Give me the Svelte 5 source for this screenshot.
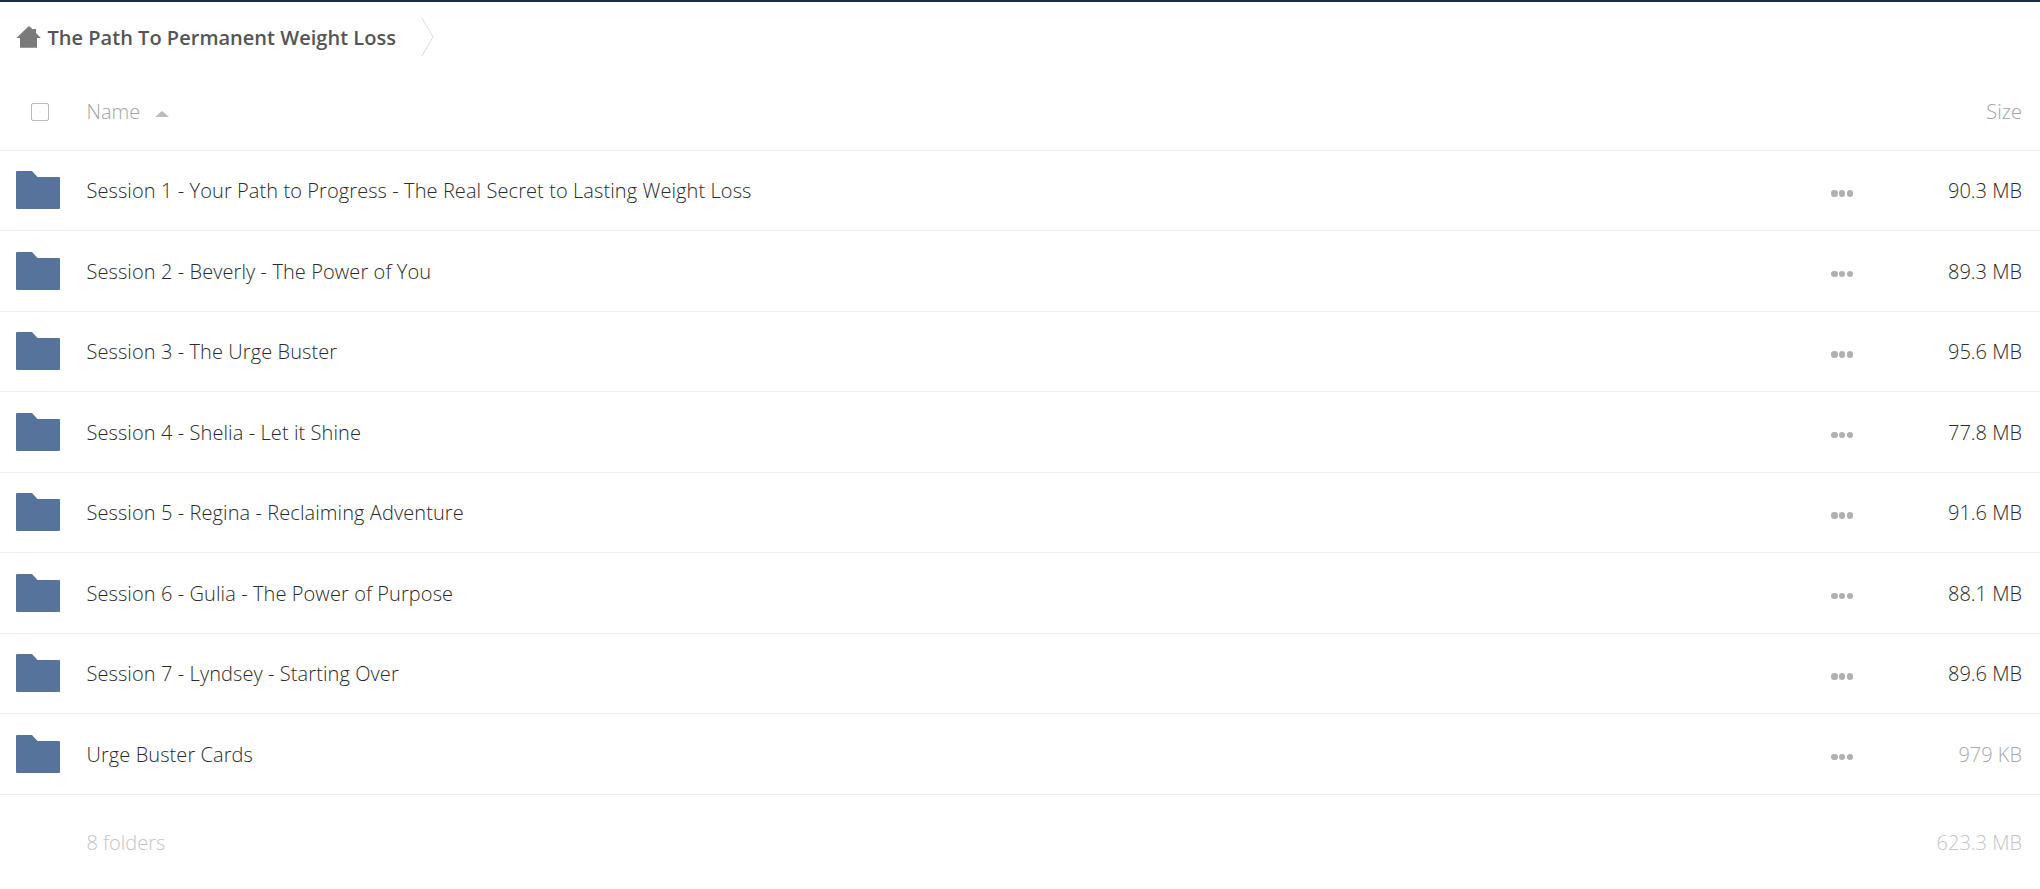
<script>
  let folders = [
    { name: 'Session 1 - Your Path to Progress - The Real Secret to Lasting Weight Loss', size: '90.3 MB' },
    { name: 'Session 2 - Beverly - The Power of You', size: '89.3 MB' },
    { name: 'Session 3 - The Urge Buster', size: '95.6 MB' },
    { name: 'Session 4 - Shelia - Let it Shine', size: '77.8 MB' },
    { name: 'Session 5 - Regina - Reclaiming Adventure', size: '91.6 MB' },
    { name: 'Session 6 - Gulia - The Power of Purpose', size: '88.1 MB' },
    { name: 'Session 7 - Lyndsey - Starting Over', size: '89.6 MB' },
    { name: 'Urge Buster Cards', size: '979 KB', small: true }
  ];
</script>

<div class="page">
  <nav class="crumbs">
    <svg class="home" width="25" height="22" viewBox="0 0 25 22">
      <path d="M13 0 L17 3.4 V3 H20 V7 L24.8 12 H21 V21.8 H4 V12 H0.4 Z" fill="#7a7a7a" />
    </svg>
    <span class="crumb-title">The Path To Permanent Weight Loss</span>
    <svg class="chevron" width="14" height="40" viewBox="0 0 14 40">
      <path d="M1 1 L12 20 L1 39" fill="none" stroke="#dcdcdc" stroke-width="1" />
    </svg>
  </nav>

  <div class="row head">
    <div class="check-cell"><span class="checkbox"></span></div>
    <div class="name">Name <span class="sort"></span></div>
    <div class="size">Size</div>
  </div>

  {#each folders as folder}
    <div class="row item">
      <svg class="folder" width="44" height="38" viewBox="0 0 44 38">
        <path d="M1 0 H16 L21.5 6 H43 a1 1 0 0 1 1 1 V37 a1 1 0 0 1 -1 1 H1 a1 1 0 0 1 -1 -1 V1 a1 1 0 0 1 1 -1 Z" fill="#56749b" />
      </svg>
      <div class="name">{folder.name}</div>
      <div class="dots"><i></i><i></i><i></i></div>
      <div class="size" class:small={folder.small}>{folder.size}</div>
    </div>
  {/each}

  <div class="row summary">
    <div class="name">8 folders</div>
    <div class="size">623.3 MB</div>
  </div>
</div>

<style>
  :global(body) {
    margin: 0;
    background: #fff;
  }
  .page {
    border-top: 2px solid #1d2d44;
    font-family: "Open Sans", "Liberation Sans", sans-serif;
    font-weight: 300;
    font-size: 20px;
    color: #2b2b2b;
    height: 887px;
    overflow: hidden;
  }
  .crumbs {
    display: flex;
    align-items: center;
    height: 70px;
    padding-left: 16px;
  }
  .home {
    margin-right: 6.5px;
  }
  .crumb-title {
    font-weight: 600;
    color: #555;
    letter-spacing: 0.02px;
  }
  .chevron {
    margin-left: 25px;
  }
  .row {
    display: flex;
    align-items: center;
    padding: 0 18px 0 16px;
  }
  .head {
    height: 76.9px;
    padding-top: 1px;
    border-bottom: 1px solid #eee;
    color: #a3a3a3;
  }
  .check-cell {
    width: 70px;
    display: flex;
    padding-left: 15px;
    box-sizing: border-box;
  }
  .checkbox {
    width: 16px;
    height: 16px;
    margin-top: 1px;
    border: 1.5px solid #bbb;
    border-radius: 2px;
  }
  .head .name {
    padding-left: 0.5px;
  }
  .sort {
    display: inline-block;
    margin-left: 10px;
    vertical-align: middle;
    border-left: 7px solid transparent;
    border-right: 7px solid transparent;
    border-bottom: 6px solid #bbb;
  }
  .item {
    height: 80.5px;
    box-sizing: border-box;
    border-bottom: 1px solid #eee;
  }
  .item .name {
    letter-spacing: 0.085px;
  }
  .folder {
    margin-right: 26.5px;
    margin-bottom: 1px;
    flex: none;
  }
  .name {
    flex: 1;
  }
  .dots {
    display: flex;
    gap: 1.25px;
    padding-top: 6px;
  }
  .dots i {
    width: 6.5px;
    height: 6.5px;
    border-radius: 50%;
    background: #b0b0b0;
  }
  .size {
    width: 169px;
    text-align: right;
  }
  .size.small {
    color: #aaa;
  }
  .summary {
    height: 96px;
    color: #c4c4c4;
    padding-left: 86.5px;
  }
</style>
